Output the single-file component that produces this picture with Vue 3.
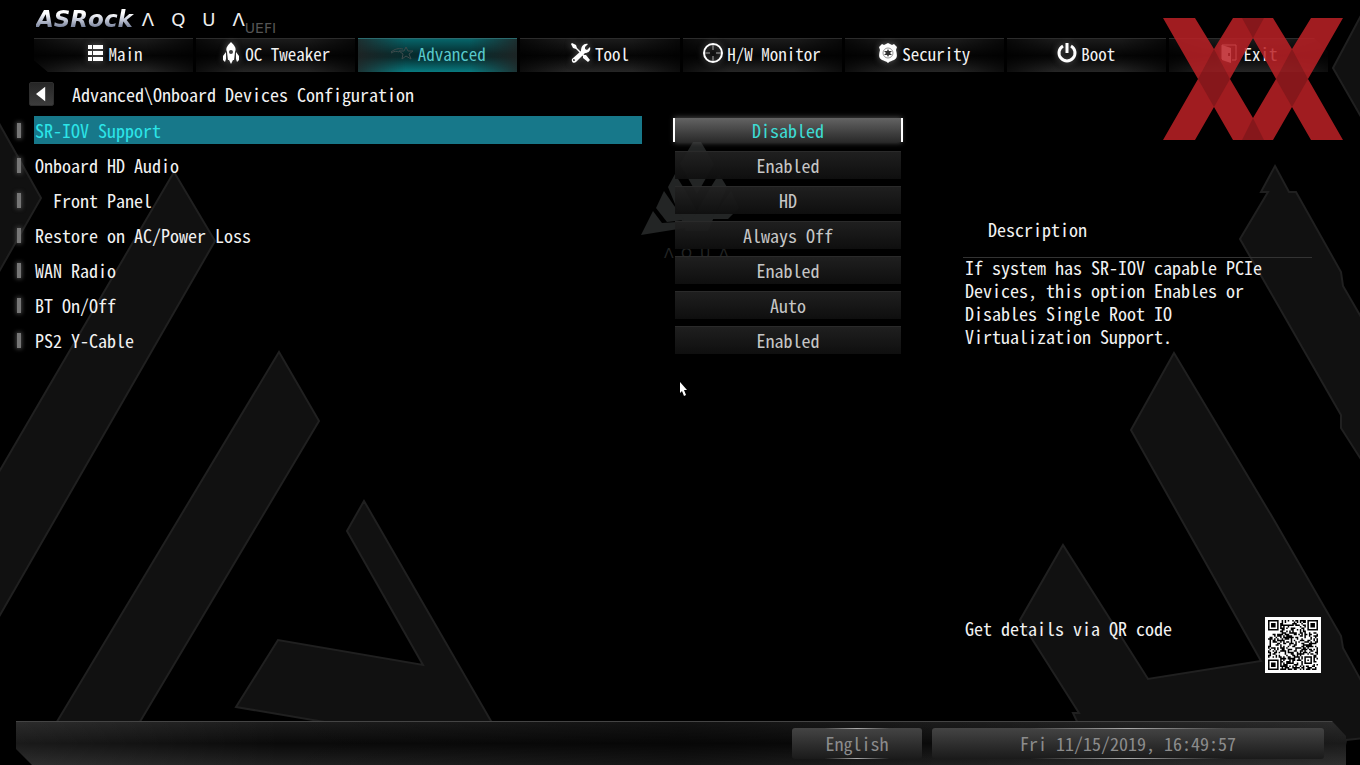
<template>
  <div class="uefi">
    <svg class="backdrop" viewBox="0 0 1360 765" preserveAspectRatio="xMidYMid slice" aria-hidden="true">
      <g class="slabs">
        <path d="M-4 118 L41 198 L-4 277 Z" />
        <path d="M174 172 L215 241 L-4 622 V477 Z" />
        <path d="M279 352 L319 421 L135 730 H52 Z" />
        <path d="M364 501 L347 531 L423 665 L278 640 L236 707 L360 728 L495 728 Z" />
        <path d="M1275 166 L1289 192 H1296 L1341 272 L1343 286 L1364 322 V464 L1341 428 V415 L1240 239 L1268 192 L1261 192 Z" />
        <path d="M1174 353 L1274 520 L1341 636 L1343 648 L1364 686 V738 L1346 740 L1340 770 H1100 L1073 713 H1079 L1020 620 L1063 545 L1148 679 L1261 661 L1131 430 Z" />
        <path d="M1364 10 L1333 68 L1364 122 Z" />
      </g>
      <g class="emblem">
        <path d="M693 142 H701 L714 164 L697 194 L680 164 Z" />
        <path d="M675 174 L685 190 L708 231 H686 L668 187 Z" />
        <path d="M719 174 L709 190 L686 231 H708 L727 187 Z" />
        <path d="M664 191 L656 208 L667 222 L684 220 Z" />
        <path d="M653 211 L641 235 L697 226 L692 221 L662 223 Z" />
        <path d="M731 191 L739 208 L728 219 L711 219 Z" />
        <text x="664 681 700 719" y="258">ΛQUΛ</text>
      </g>
    </svg>

    <header class="brand">
      <span class="brand-name">ASRock</span>
      <span class="brand-edition">
        <span v-for="(letter, i) in 'ΛQUΛ'" :key="i">{{ letter }}</span>
      </span>
      <span class="brand-kind">UEFI</span>
    </header>

    <nav class="tabs">
      <a
        v-for="tab in tabs"
        :key="tab.name"
        href="#"
        class="tab"
        :class="{ active: tab.name === activeTab }"
        @click.prevent="activeTab = tab.name"
      >
        <svg v-if="tab.icon === 'list'" class="icon" viewBox="0 0 20 20">
          <path d="M3 2h4v4H3zM8 2h10v4H8zM3 8h4v4H3zM8 8h10v4H8zM3 14h4v4H3zM8 14h10v4H8z" />
        </svg>
        <svg v-else-if="tab.icon === 'rocket'" class="icon" viewBox="0 0 20 20">
          <path fill-rule="evenodd" d="M10 -1c3 3 6 6 4 10l-1 8H7L6 9C4 5 7 2 10 -1zM10 7a2 2 0 1 0 0 4a2 2 0 1 0 0-4z" />
          <path d="M5 9v7l-1 3-2-2v-4zM15 9v7l1 3 2-2v-4zM8 17h4l-2 4z" />
        </svg>
        <svg v-else-if="tab.icon === 'star'" class="icon wide" viewBox="0 0 24 20">
          <path class="line" d="M16 4l2 4 5 0-4 3 2 5-5-3-4 3 1-5-4-3 5 0zM1 9c4-3 7-4 12-3M1 10c3-2 6-2 8-1" />
        </svg>
        <svg v-else-if="tab.icon === 'tools'" class="icon" viewBox="0 0 20 20">
          <path d="M1 0l4 2 1 3 4 4 3 3 2 0 4 5-2 2-5-4 0-2-3-3-4-4-3-1-2-4z" />
          <path d="M17 1l-3 3 0 2 2 1 3-3c1 3-1 6-5 6L5 19c-2 2-5 0-4-3l9-8c0-5 3-8 7-7zM3 16a1 1 0 1 0 1 1z" />
        </svg>
        <svg v-else-if="tab.icon === 'scope'" class="icon" viewBox="0 0 20 20">
          <circle class="line thick" cx="10" cy="10" r="9" />
          <path class="line faint" d="M10 2v5M10 13v5M2 10h5M13 10h5" />
        </svg>
        <svg v-else-if="tab.icon === 'badge'" class="icon" viewBox="0 0 20 20">
          <path d="M4 1l2 1 4-2 4 2 2-1 3 3-1 3c1 4 2 8-2 10-2 1-4 1-6 3-2-2-4-2-6-3-4-2-3-6-2-10L1 4z" />
          <circle class="cut" cx="10" cy="10" r="5" />
          <path class="cut-fill" d="M10 6l1 2 3 0-2 2 2 2-3 0-1 2-1-2-3 0 2-2-2-2 3 0z" />
        </svg>
        <svg v-else-if="tab.icon === 'power'" class="icon" viewBox="0 0 20 20">
          <path class="line power" d="M6 3a8 8 0 1 0 8 0M10 0v10" />
        </svg>
        <svg v-else class="icon" viewBox="0 0 20 20">
          <path class="line" d="M3 16V2h14v15h-4" />
          <path fill-rule="evenodd" d="M3 2l9 3v15l-9-3zM9 10v3h2v-3z" />
        </svg>
        <span>{{ tab.name }}</span>
      </a>
    </nav>

    <div class="crumbs">
      <button type="button" class="back" aria-label="Back">
        <svg viewBox="0 0 24 24"><path d="M16 4v16L6 12z" /></svg>
      </button>
      <h1>Advanced\Onboard Devices Configuration</h1>
    </div>

    <main class="content">
      <form class="settings" @submit.prevent>
        <div
          v-for="item in settings"
          :key="item.id"
          class="setting"
          :class="{ selected: item.id === selected }"
          @mousedown="selected = item.id"
        >
          <i class="marker"></i>
          <label :for="item.id" :class="{ nested: item.nested }">{{ item.label }}</label>
          <select :id="item.id" v-model="item.value">
            <option v-for="option in item.options" :key="option">{{ option }}</option>
          </select>
        </div>
      </form>

      <aside class="help">
        <h2>Description</h2>
        <p class="help-text">{{ description }}</p>
        <div class="qr-row">
          <p>Get details via QR code</p>
          <svg class="qr" viewBox="-2 -2 37 37" role="img" aria-label="QR code">
            <rect x="-2" y="-2" width="37" height="37" fill="#fff" />
            <path :d="qrPath" />
          </svg>
        </div>
      </aside>
    </main>

    <footer class="status">
      <div class="status-bar">
        <button type="button" class="panel language">English</button>
        <time class="panel clock">Fri 11/15/2019, 16:49:57</time>
      </div>
    </footer>

    <svg class="watermark" viewBox="0 0 180 122" aria-hidden="true">
      <path d="M0 0H32L51 31L70 0H110L129 31L148 0H180L145 61L180 122H148L129 89L110 122H70L51 89L32 122H0L35 61ZM90 20L67 61L90 100L113 61Z" fill="#bc2126" fill-rule="evenodd" />
      <path d="M51 31L67 61L51 89L35 61ZM129 31L145 61L129 89L113 61ZM79 0H101L90 20ZM90 100L101 122H79Z" fill="#9e1c20" />
    </svg>

    <svg class="pointer" viewBox="0 0 8 14" aria-hidden="true">
      <path d="M0 0L7 8H4L6 13L4 14L2 9L0 11Z" />
    </svg>
  </div>
</template>

<script setup>
import { ref, reactive } from 'vue'

const tabs = [
  { name: 'Main', icon: 'list' },
  { name: 'OC Tweaker', icon: 'rocket' },
  { name: 'Advanced', icon: 'star' },
  { name: 'Tool', icon: 'tools' },
  { name: 'H/W Monitor', icon: 'scope' },
  { name: 'Security', icon: 'badge' },
  { name: 'Boot', icon: 'power' },
  { name: 'Exit', icon: 'door' }
]
const activeTab = ref('Advanced')

const onOff = ['Enabled', 'Disabled']
const settings = reactive([
  { id: 'sriov', label: 'SR-IOV Support', value: 'Disabled', options: onOff },
  { id: 'audio', label: 'Onboard HD Audio', value: 'Enabled', options: onOff },
  { id: 'front-panel', label: 'Front Panel', value: 'HD', options: ['HD', 'AC97'], nested: true },
  { id: 'power-loss', label: 'Restore on AC/Power Loss', value: 'Always Off', options: ['Always Off', 'Always On'] },
  { id: 'wan', label: 'WAN Radio', value: 'Enabled', options: onOff },
  { id: 'bt', label: 'BT On/Off', value: 'Auto', options: ['Auto', ...onOff] },
  { id: 'ps2', label: 'PS2 Y-Cable', value: 'Enabled', options: onOff }
])
const selected = ref('sriov')

const description =
  'If system has SR-IOV capable PCIe Devices, this option Enables or Disables Single Root IO Virtualization Support.'

// square ring with a solid centre, as in the corners of a QR code
const inFinder = (x, y, left, top, size) => {
  const dx = x - left
  const dy = y - top
  if (dx < -1 || dy < -1 || dx > size || dy > size) return null
  const edge = (size - 1) / 2
  const ring = Math.max(Math.abs(dx - edge), Math.abs(dy - edge))
  return ring === edge || ring < edge - 1
}

const buildQr = () => {
  const n = 33
  let seed = 2019
  let d = ''
  for (let y = 0; y < n; y++) {
    for (let x = 0; x < n; x++) {
      seed = (seed * 1103515245 + 12345) % 2147483648
      const finder =
        inFinder(x, y, 0, 0, 7) ?? inFinder(x, y, n - 7, 0, 7) ?? inFinder(x, y, 0, n - 7, 7) ?? inFinder(x, y, 24, 24, 5)
      const dark = finder ?? seed / 2147483648 > 0.48
      if (dark) d += `M${x} ${y}h1v1h-1z`
    }
  }
  return d
}
const qrPath = buildQr()
</script>

<style>
body {
  margin: 0;
  background: #000;
}
</style>

<style scoped>
.uefi {
  position: relative;
  display: flex;
  flex-direction: column;
  min-height: 100vh;
  overflow: hidden;
  background: #000;
  color: #f2f2f2;
  font-family: "Noto Sans CJK JP", "Liberation Mono", monospace;
  font-size: 18px;
  font-feature-settings: "hwid", "liga" 0;
  font-kerning: none;
  line-height: 23px;
}

.uefi > * {
  position: relative;
}

h1,
h2,
p {
  margin: 0;
  font-size: 18px;
  font-weight: 400;
}

.uefi > .backdrop {
  position: absolute;
  inset: 0;
  width: 100%;
  height: 100%;
}

.slabs path {
  fill: #111;
  stroke: #202020;
  stroke-width: 2;
}

.emblem {
  fill: #232525;
}

.emblem text {
  font-family: "DejaVu Sans", sans-serif;
  font-size: 14px;
}

/* brand */
.brand {
  display: flex;
  align-items: center;
  height: 38px;
  padding-left: 36px;
  font-family: "DejaVu Sans", sans-serif;
  font-feature-settings: normal;
}

.brand-name {
  padding-right: 4px;
  font-size: 23px;
  font-weight: 700;
  font-style: italic;
  background: linear-gradient(#fff 25%, #c5cad8 50%, #7f88a0 80%);
  background-clip: text;
  color: transparent;
}

.brand-edition {
  display: flex;
  gap: 17px;
  margin-left: 5px;
  font-size: 18px;
  color: #eee;
}

.brand-kind {
  align-self: flex-end;
  margin-bottom: -2px;
  font-size: 14px;
  color: #555;
}

/* tabs */
.tabs {
  display: flex;
  gap: 3px;
  padding: 0 32px 0 34px;
}

.tab {
  flex: 1;
  display: flex;
  align-items: center;
  justify-content: center;
  gap: 4px;
  height: 34px;
  padding-bottom: 5px;
  box-sizing: border-box;
  border-top: 1px solid #2c2c2c;
  background:
    linear-gradient(90deg, #000a, transparent 30%, transparent 70%, #000a),
    linear-gradient(#1b1b1b, #050505 50%, #0a0a0a 60%, #262626);
  color: #f2f2f2;
  font-size: 17px;
  text-decoration: none;
}

.tab:first-child {
  clip-path: polygon(0 0, 100% 0, 100% 100%, 14px 100%, 0 22px);
}

.tab:last-child {
  clip-path: polygon(0 0, calc(100% - 14px) 0, 100% 14px, 100% 100%, 0 100%);
}

.tab.active {
  border-top-color: #2c6a6e;
  background:
    linear-gradient(90deg, #222c, transparent 30%, transparent 70%, #222c),
    linear-gradient(#066469, #062c2e 45%, #062c2e 55%, #087a80);
  color: #57c8cc;
}

.icon {
  width: 20px;
  height: 20px;
  overflow: visible;
  fill: #fff;
  filter: drop-shadow(0 0 3px #aaa8);
}

.icon.wide {
  width: 24px;
}

.line {
  fill: none;
  stroke: #fff;
  stroke-width: 1;
}

.thick {
  stroke-width: 2;
}

.faint {
  stroke: #aaa;
}

.power {
  stroke-width: 3;
}

.cut {
  fill: none;
  stroke: #999;
}

.cut-fill {
  fill: #333;
}

.tab.active .icon {
  filter: none;
}

.tab.active .line {
  stroke: #3d4b4c;
}

/* path */
.crumbs {
  display: flex;
  align-items: center;
  gap: 18px;
  padding: 10px 29px;
}

.back {
  width: 25px;
  height: 24px;
  padding: 0;
  border: 1px solid #2e2e2e;
  border-radius: 2px;
  background: linear-gradient(#262626, #3c3c3c);
}

.back svg {
  display: block;
  width: 23px;
  height: 22px;
  fill: #fff;
}

/* settings */
.content {
  flex: 1;
  display: flex;
  gap: 62px;
  padding-right: 39px;
}

.settings {
  flex: 1;
  display: flex;
  flex-direction: column;
  gap: 7px;
}

.setting {
  display: flex;
  align-items: center;
  padding-left: 17px;
}

.marker {
  width: 4px;
  height: 15px;
  margin-right: 13px;
  background: #777;
  box-shadow: 0 0 4px 1px #444;
}

label {
  flex: 1;
  margin-right: 33px;
  padding-left: 1px;
  line-height: 28px;
}

label.nested {
  padding-left: 19px;
}

select {
  width: 226px;
  height: 28px;
  padding: 0;
  border: 0;
  border-radius: 0;
  appearance: none;
  background: linear-gradient(#222e, #0f0f0ff5);
  box-shadow: inset 0 1px #2a2a2a;
  color: #c6c6c6;
  font: inherit;
  font-feature-settings: inherit;
  font-kerning: none;
  text-align: center;
  text-align-last: center;
  outline: none;
}

.selected label {
  background: #17788a;
  color: #2ce5e8;
}

.selected select {
  height: 24px;
  background: linear-gradient(#636363, #2a2a2a);
  box-shadow: -2px 0 #fff, 2px 0 #fff, 0 0 5px 1px #444;
  color: #3edbd4;
}

/* help */
.help {
  display: flex;
  flex-direction: column;
  width: 358px;
  padding-top: 102px;
}

.help h2 {
  margin-right: 9px;
  padding: 0 0 16px 25px;
  border-bottom: 1px solid #333;
}

.help-text {
  margin-top: -2px;
  padding: 0 40px 0 2px;
}

.qr-row {
  display: flex;
  justify-content: space-between;
  margin: auto 0 48px;
  padding-left: 2px;
}

.qr {
  width: 56px;
  height: 56px;
}

/* status */
.status {
  padding: 0 14px 0 16px;
}

.status-bar {
  display: flex;
  justify-content: flex-end;
  gap: 10px;
  height: 44px;
  padding: 6px 22px 6px 0;
  box-sizing: border-box;
  border-top: 1px solid #444;
  background:
    linear-gradient(90deg, #fff1, transparent 20%, #0005 50%, transparent 70%, #fff1),
    linear-gradient(#1c1c1c, #0a0a0a 50%, #202020);
  clip-path: polygon(0 0, calc(100% - 14px) 0, 100% 15px, 100% 100%, 16px 100%, 0 28px);
}

.panel {
  height: 31px;
  padding: 0;
  border: 0;
  border-radius: 3px;
  background:
    linear-gradient(90deg, transparent 25%, #aaa, transparent 75%) top / 100% 1px no-repeat,
    linear-gradient(90deg, transparent 25%, #aaa, transparent 75%) bottom / 100% 1px no-repeat,
    linear-gradient(#444, #1a1a1a);
  color: #8c8c8c;
  font: inherit;
  font-feature-settings: inherit;
  line-height: 31px;
  text-align: center;
}

.language {
  width: 130px;
}

.clock {
  width: 392px;
}

.uefi > .watermark {
  position: absolute;
  top: 18px;
  right: 17px;
  width: 180px;
  height: 122px;
  opacity: 0.85;
}

.uefi > .pointer {
  position: absolute;
  top: 382px;
  left: 50%;
  width: 8px;
  height: 14px;
  fill: #fff;
}
</style>
